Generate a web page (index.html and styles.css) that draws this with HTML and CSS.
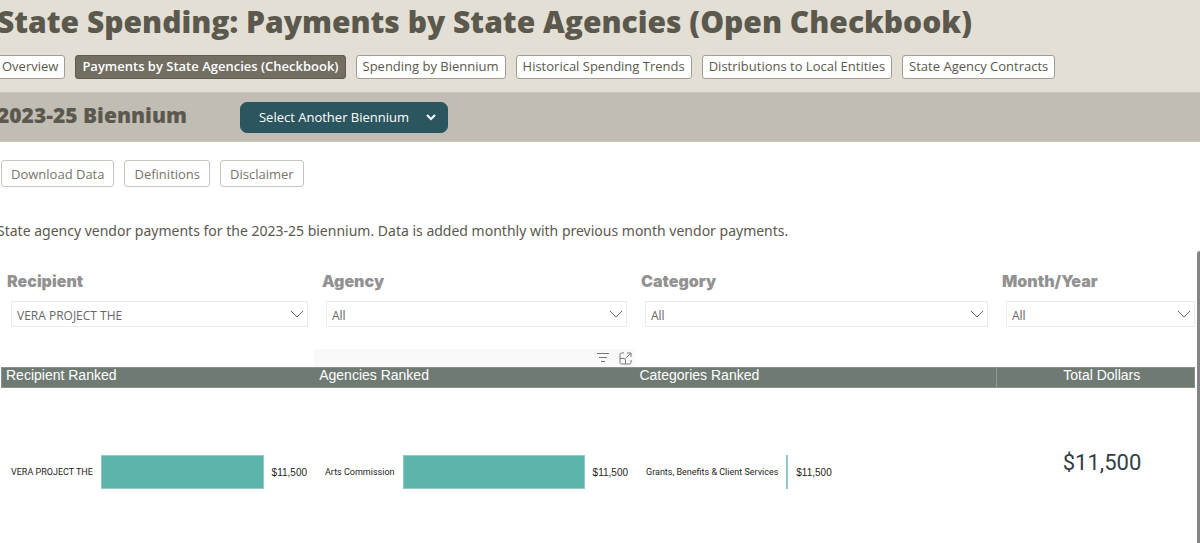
FILE: index.html
```
<!DOCTYPE html>
<html lang="en">
<head>
    <meta charset="UTF-8">
    <title>State Spending: Payments by State Agencies</title>
    <link rel="stylesheet" href="styles.css">
</head>
<body>
    <!-- Page title and section links -->
    <header class="page-header">
        <h1>State Spending: Payments by State Agencies (Open Checkbook)</h1>
        <nav class="tabs">
            <a href="#">Overview</a>
            <a href="#" class="active">Payments by State Agencies (Checkbook)</a>
            <a href="#">Spending by Biennium</a>
            <a href="#">Historical Spending Trends</a>
            <a href="#">Distributions to Local Entities</a>
            <a href="#">State Agency Contracts</a>
        </nav>
    </header>

    <!-- Biennium picker -->
    <div class="biennium">
        <h2>2023-25 Biennium</h2>
        <button type="button" class="biennium-button">
            Select Another Biennium
            <svg width="12" height="8" viewBox="0 0 12 8"><path d="M2 2l4 4 4-4" fill="none" stroke="#fff" stroke-width="2"/></svg>
        </button>
    </div>

    <main>
        <div class="actions">
            <button type="button">Download Data</button>
            <button type="button">Definitions</button>
            <button type="button">Disclaimer</button>
        </div>
        <p class="intro">State agency vendor payments for the 2023-25 biennium. Data is added monthly with previous month vendor payments.</p>

        <!-- Embedded report -->
        <div class="report">
            <div class="columns filters">
                <div class="filter">
                    <label for="recipient">Recipient</label>
                    <div class="select-box">
                        <select id="recipient"><option>VERA PROJECT THE</option></select>
                        <svg width="14" height="8" viewBox="0 0 14 8"><path d="M1 1l6 6 6-6"/></svg>
                    </div>
                </div>
                <div class="filter">
                    <label for="agency">Agency</label>
                    <div class="select-box">
                        <select id="agency"><option>All</option></select>
                        <svg width="14" height="8" viewBox="0 0 14 8"><path d="M1 1l6 6 6-6"/></svg>
                    </div>
                </div>
                <div class="filter">
                    <label for="category">Category</label>
                    <div class="select-box">
                        <select id="category"><option>All</option></select>
                        <svg width="14" height="8" viewBox="0 0 14 8"><path d="M1 1l6 6 6-6"/></svg>
                    </div>
                </div>
                <div class="filter">
                    <label for="month">Month/Year</label>
                    <div class="select-box last">
                        <select id="month"><option>All</option></select>
                        <svg width="14" height="8" viewBox="0 0 14 8"><path d="M1 1l6 6 6-6"/></svg>
                    </div>
                </div>
            </div>

            <!-- Hover toolbar of the agencies chart -->
            <div class="columns toolbar-row">
                <div class="toolbar">
                    <button type="button" aria-label="Filters">
                        <svg width="12" height="10" viewBox="0 0 12 10"><path d="M0 .5h12M2 4.500h8M4 8.500h4"/></svg>
                    </button>
                    <button type="button" aria-label="Focus mode">
                        <svg width="13" height="13" viewBox="0 0 13 13"><path d="M5 1H2.500A1.500 1.500 0 0 0 1 2.500v8A1.500 1.500 0 0 0 2.500 12h8a1.500 1.500 0 0 0 1.500-1.500V8M8 1h4v4M12 1L7 6M1 6.500h4A1.500 1.500 0 0 1 6.500 8v4"/></svg>
                    </button>
                </div>
            </div>

            <div class="columns headings">
                <h3>Recipient Ranked</h3>
                <h3>Agencies Ranked</h3>
                <h3>Categories Ranked</h3>
                <h3 class="total-heading">Total Dollars</h3>
            </div>

            <div class="columns results">
                <div class="chart">
                    <span class="name">VERA PROJECT THE</span>
                    <span class="bar"></span>
                    <span class="amount">$11,500</span>
                </div>
                <div class="chart">
                    <span class="name">Arts Commission</span>
                    <span class="bar"></span>
                    <span class="amount">$11,500</span>
                </div>
                <div class="chart">
                    <span class="name">Grants, Benefits &amp; Client Services</span>
                    <span class="bar thin"></span>
                    <span class="amount">$11,500</span>
                </div>
                <div class="total">$11,500</div>
            </div>
            <div class="scrollbar"></div>
        </div>
    </main>
</body>
</html>
```

FILE: styles.css
```
* {
    box-sizing: border-box;
}

body {
    margin: 0;
    min-height: 100vh;
    display: flex;
    flex-direction: column;
    overflow: hidden;
    background: #fff;
    color: #5b584e;
    font-family: "Open Sans", sans-serif;
}

h1, h2, h3, p {
    margin: 0;
}

button {
    font-family: inherit;
    cursor: pointer;
}

/* Header */
.page-header {
    height: 93px;
    background: #e3dfd4;
    border-bottom: 1px solid #c9c4b8;
}

h1 {
    margin-left: -3px;
    font-size: 30px;
    line-height: 44px;
    font-weight: 800;
    white-space: nowrap;
}

.tabs {
    display: flex;
    gap: 10px;
    margin: 11px 0 0 -5px;
}

.tabs a {
    height: 24px;
    padding: 0 6px;
    border: 1px solid #a19d93;
    border-radius: 3px;
    background: #fff;
    color: #5b584e;
    font-size: 13px;
    line-height: 21px;
    text-decoration: none;
    white-space: nowrap;
}

.tabs .active {
    border-color: #5f5b51;
    background: #736e62;
    color: #fff;
    font-weight: 600;
}

/* Biennium strip */
.biennium {
    display: flex;
    align-items: center;
    gap: 53px;
    height: 49px;
    border-bottom: 1px solid #cbc6ba;
    background: #c1bcb4;
}

h2 {
    margin-left: -3px;
    padding-bottom: 4px;
    font-size: 21px;
    line-height: 28px;
    font-weight: 800;
}

.biennium-button {
    display: flex;
    align-items: center;
    gap: 16px;
    height: 31px;
    padding: 0 10px 0 18px;
    border: 1px solid #285660;
    border-radius: 7px;
    background: #2b5660;
    color: #fff;
    font-size: 13px;
}

/* Buttons and intro */
.actions {
    display: flex;
    gap: 10px;
    padding: 18px 0 0 1px;
}

.actions button {
    height: 27px;
    padding: 0 9px;
    border: 1px solid #c8c5bd;
    border-radius: 3px;
    background: #fff;
    color: #77736a;
    font-size: 13px;
}

.intro {
    margin: 32px 0 0 -3px;
    font-family: "Noto Sans", sans-serif;
    font-size: 14px;
    line-height: 24px;
    white-space: nowrap;
}

main {
    flex: 1;
    display: flex;
    flex-direction: column;
}

/* Report */
.report {
    position: relative;
    flex: 1;
    margin-top: 8px;
    padding: 18px 5px 0 0;
}

.columns {
    display: grid;
    grid-template-columns: 314fr 321fr 362fr 198fr;
}

.filters {
    grid-template-columns: 315fr 319fr 361fr 200fr;
}

.filter {
    min-width: 0;
    padding-left: 7px;
}

.filter label {
    display: block;
    color: #929292;
    font-family: Inter, sans-serif;
    font-size: 16px;
    line-height: 24px;
    font-weight: 900;
}

.select-box {
    position: relative;
    height: 26px;
    margin: 8px 7px 0 4px;
}

.select-box.last {
    margin-right: 0;
}

.select-box select {
    width: 100%;
    height: 100%;
    padding: 2px 24px 0 5px;
    border: 1px solid #ebebeb;
    border-radius: 0;
    background: #fff;
    color: #666;
    font-family: inherit;
    font-size: 12px;
    appearance: none;
}

.select-box svg {
    position: absolute;
    right: 4px;
    top: 9px;
    fill: none;
    stroke: #666;
    pointer-events: none;
}

.toolbar-row {
    margin-top: 22px;
}

.toolbar {
    grid-column: 2;
    display: flex;
    justify-content: flex-end;
    align-items: center;
    gap: 10px;
    height: 18px;
    padding-right: 3px;
    background: #f9f9f9;
}

.toolbar button {
    display: flex;
    padding: 0;
    border: 0;
    background: none;
}

.toolbar svg {
    fill: none;
    stroke: #777;
}

.headings {
    height: 21px;
    margin-left: 1px;
    border: 1px solid #88918b;
    background: #6f7a73;
}

h3 {
    padding-left: 4px;
    color: #fff;
    font-family: "Liberation Sans", Arial, sans-serif;
    font-size: 14px;
    line-height: 15px;
    font-weight: 400;
}

.total-heading {
    padding: 0 0 0 12px;
    border-left: 1px solid #929b95;
    text-align: center;
}

/* Ranked bars and total */
.results {
    align-items: start;
    padding-top: 67px;
}

.chart {
    display: flex;
    align-items: center;
    gap: 8px;
    padding: 0 7px 0 11px;
    color: #252423;
    font-family: "Liberation Sans", Arial, sans-serif;
    white-space: nowrap;
}

.name {
    font-family: Roboto, sans-serif;
    font-size: 9px;
}

.amount {
    font-size: 10px;
}

.bar {
    flex: 1;
    height: 34px;
    border: 1px solid #8dcbc3;
    background: #5cb4ab;
}

.bar.thin {
    flex: none;
    width: 2px;
}

.total {
    padding-left: 12px;
    color: #333d45;
    font-family: Roboto, sans-serif;
    font-size: 22px;
    line-height: 16px;
    text-align: center;
}

/* Scroll thumb on the report's right edge */
.scrollbar {
    position: absolute;
    top: 0;
    right: 0;
    bottom: 0;
    width: 3px;
    border-radius: 3px 0 0 0;
    background: #858585;
}
```
